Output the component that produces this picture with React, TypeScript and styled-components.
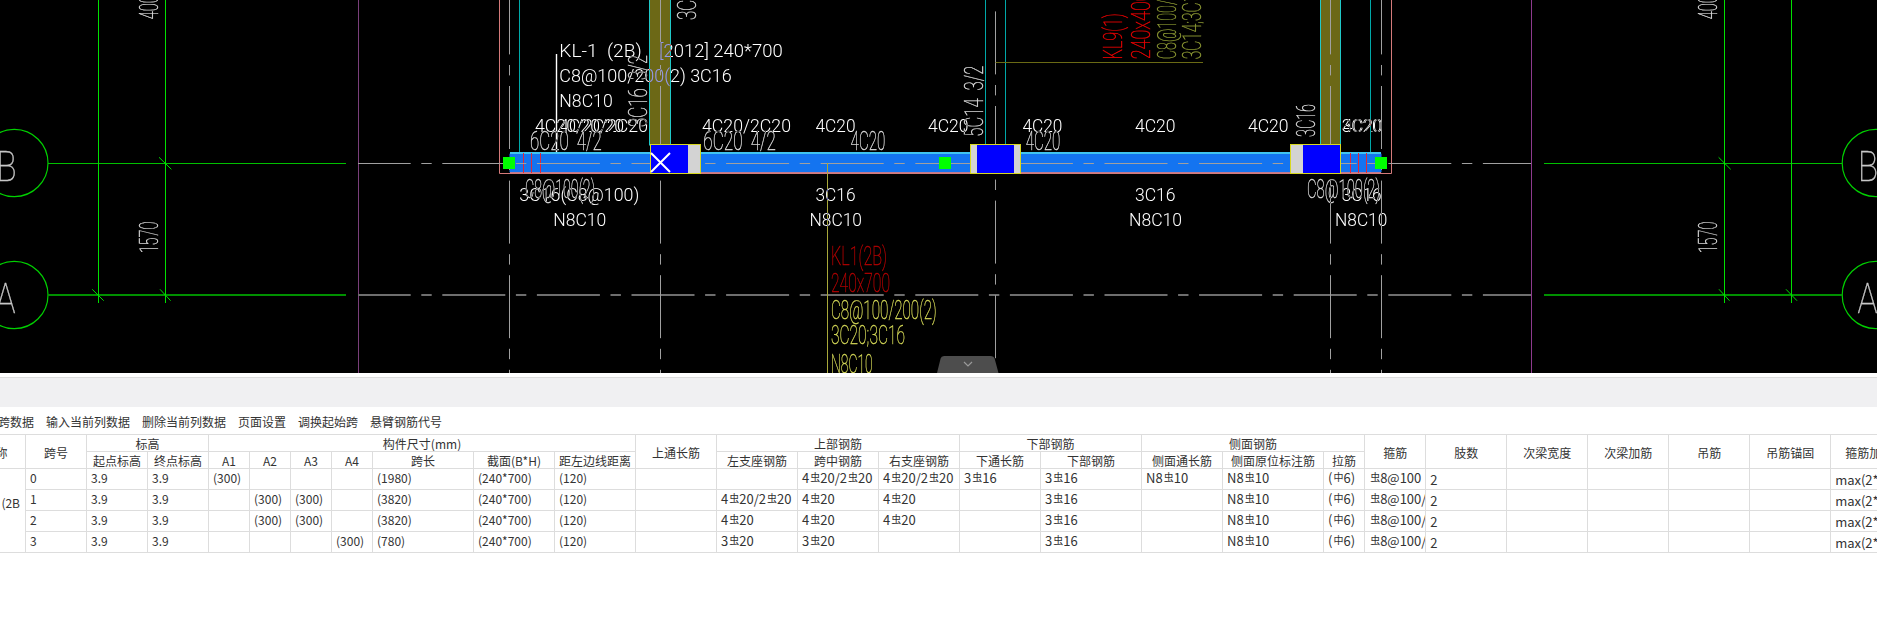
import React from "react";
import styled, { createGlobalStyle } from "styled-components";

const Global = createGlobalStyle`
  html, body { margin: 0; padding: 0; background: #fff; overflow: hidden; }
  body { width: 1877px; height: 636px; font-family: "Noto Sans CJK SC", "Liberation Sans", sans-serif; }
`;

const Page = styled.div`
  width: 1877px;
  height: 636px;
  display: flex;
  flex-direction: column;
  overflow: hidden;
  background: #fff;
`;

const CanvasArea = styled.div`
  position: relative;
  height: 373px;
  flex: none;
  background: #000;
`;

const Drawing = styled.svg`
  display: block;
  width: 1877px;
  height: 373px;
  background: #000;
  isolation: isolate;
`;

const CollapseTab = styled.button`
  position: absolute;
  left: 937px;
  bottom: 0;
  width: 62px;
  height: 17px;
  padding: 0;
  border: 0;
  background: none;
  display: block;
`;

const Divider = styled.div`
  flex: none;
  height: 4px;
  background: #fff;
  border-bottom: 1px solid #dcdcdc;
`;

const Band = styled.div`
  flex: none;
  height: 29px;
  background: #f0f0f2;
`;

const Toolbar = styled.div`
  flex: none;
  height: 28px;
  margin-left: -50px;
  display: flex;
  align-items: center;
  gap: 12px;
  padding-top: 2px;
  box-sizing: border-box;
`;

const ToolItem = styled.span`
  font-size: 12px;
  line-height: 16px;
  color: #333;
  white-space: nowrap;
`;

const TableViewport = styled.div`
  flex: none;
  overflow: hidden;
  width: 1877px;
  margin-top: -1px;
`;

const Grid = styled.table<{ $width: number }>`
  border-collapse: collapse;
  table-layout: fixed;
  width: ${(p) => p.$width}px;
  margin-left: -59px;
  font-size: 12px;
  color: #333;
`;

const HeadCell = styled.th`
  border: 1px solid #dddddd;
  padding: 1px 0 0;
  height: 15px;
  line-height: 15px;
  font-weight: 400;
  text-align: center;
  white-space: nowrap;
  overflow: hidden;
  vertical-align: middle;
`;

const Cell = styled.td<{ $low?: boolean; $size?: number }>`
  border: 1px solid #dddddd;
  padding: ${(p) => (p.$low ? "1px 0 0 4px" : "0 0 2px 4px")};
  height: ${(p) => (p.$low ? 19 : 18)}px;
  line-height: 16px;
  font-size: ${(p) => p.$size ?? 12}px;
  white-space: nowrap;
  overflow: hidden;
  vertical-align: middle;
`;

const NameCell = styled.td`
  border: 1px solid #dddddd;
  padding: 0 5px 16px 0;
  text-align: right;
  white-space: nowrap;
  overflow: hidden;
  vertical-align: middle;
`;

const BarMark = styled.span`
  font-size: 10px;
  line-height: 10px;
  display: inline-block;
  vertical-align: 2px;
  margin: 0 0 0 1px;
`;

const CadText = styled.text<{ $tone: string; $size: number; $thin?: boolean }>`
  font-family: "Roboto", "Liberation Sans", sans-serif;
  font-weight: ${(p) => (p.$thin ? 100 : 300)};
  font-size: ${(p) => p.$size}px;
  fill: ${(p) => p.$tone};
  stroke: ${(p) => (p.$thin ? p.$tone : "none")};
  stroke-width: ${(p) => (p.$thin ? 0.4 : 0)}px;
  white-space: pre;
  mix-blend-mode: difference;
`;

const DASH = "63 10.6 10.4 10.6";

type Lab = { x: number; y: number; w: number; t: string; c?: string; up?: boolean };

const whiteLabels: Lab[] = [
  { x: 559.3, y: 56.7, w: 82.4, t: "KL-1  (2B)" },
  { x: 659, y: 56.7, w: 123.7, t: "[2012] 240*700" },
  { x: 559.3, y: 81.7, w: 172.4, t: "C8@100/200(2) 3C16" },
  { x: 559.3, y: 107.3, w: 53.4, t: "N8C10" },
  { x: 535, y: 131.7, w: 89, t: "4C20/2C20" },
  { x: 559, y: 131.7, w: 89, t: "4C20/2C20" },
  { x: 702, y: 131.7, w: 89, t: "4C20/2C20" },
  { x: 815.5, y: 131.7, w: 40, t: "4C20" },
  { x: 928, y: 131.7, w: 40.6, t: "4C20" },
  { x: 1022.4, y: 131.7, w: 40, t: "4C20" },
  { x: 1135, y: 131.7, w: 40.6, t: "4C20" },
  { x: 1248, y: 131.7, w: 40.6, t: "4C20" },
  { x: 1341.7, y: 131.7, w: 40, t: "3C20" },
  { x: 1342.7, y: 131.7, w: 40, t: "4C20" },
  { x: 519.3, y: 200.7, w: 120, t: "3C16(C8@100)" },
  { x: 815.5, y: 200.7, w: 40, t: "3C16" },
  { x: 1135, y: 200.7, w: 40.6, t: "3C16" },
  { x: 1341.7, y: 200.7, w: 40, t: "3C16" },
  { x: 553.3, y: 226, w: 53, t: "N8C10" },
  { x: 809.4, y: 226, w: 52.6, t: "N8C10" },
  { x: 1129, y: 226, w: 53, t: "N8C10" },
  { x: 1335, y: 226, w: 52.3, t: "N8C10" },
];

const G = "#d8d8d8";
const cadLabels: Lab[] = [
  { x: 530, y: 150, w: 71.7, t: "6C20  4/2", c: G },
  { x: 703.3, y: 150, w: 72.7, t: "6C20  4/2", c: G },
  { x: 850.6, y: 150, w: 34.7, t: "4C20", c: G },
  { x: 1025.7, y: 150, w: 34.7, t: "4C20", c: G },
  { x: 525, y: 198.3, w: 70, t: "C8@100(2)", c: G },
  { x: 1307, y: 198, w: 73, t: "C8@100(2)", c: G },
  { x: 158.4, y: 253.3, w: 31.6, t: "1570", c: G, up: true },
  { x: 158.4, y: 19.3, w: 32, t: "4000", c: G, up: true },
  { x: 1717.4, y: 253.3, w: 31.6, t: "1570", c: G, up: true },
  { x: 1717.4, y: 19.3, w: 32, t: "4000", c: G, up: true },
  { x: 983, y: 136.7, w: 71, t: "5C14  3/2", c: G, up: true },
  { x: 1315, y: 137, w: 33, t: "3C16", c: G, up: true },
  { x: 646.7, y: 127, w: 72, t: "3C16  3/2", c: G, up: true },
  { x: 696.3, y: 20, w: 72, t: "3C16  3/2", c: G, up: true },
  { x: 1122.4, y: 59.3, w: 46, t: "KL9(1)", c: "#e80000", up: true },
  { x: 1150.2, y: 59.3, w: 68, t: "240x400", c: "#e80000", up: true },
  { x: 1176, y: 59.3, w: 100, t: "C8@100/200(2)", c: "#8a9632", up: true },
  { x: 1201, y: 59.3, w: 74, t: "3C14;3C16", c: "#8a9632", up: true },
  { x: 831, y: 265, w: 56, t: "KL1(2B)", c: "#b00000" },
  { x: 831, y: 292, w: 59, t: "240x700", c: "#b00000" },
  { x: 831, y: 319, w: 105.7, t: "C8@100/200(2)", c: "#d0d455" },
  { x: 831, y: 344, w: 74, t: "3C20;3C16", c: "#d0d455" },
  { x: 831, y: 373, w: 41.6, t: "N8C10", c: "#d0d455" },
];

function Label({ l, size, thin }: { l: Lab; size: number; thin?: boolean }) {
  return (
    <CadText
      x={l.x}
      y={l.y}
      $size={size}
      $tone={l.c ?? "#fff"}
      $thin={thin}
      textLength={l.w}
      lengthAdjust="spacingAndGlyphs"
      transform={l.up ? `rotate(-90 ${l.x} ${l.y})` : undefined}
    >
      {l.t}
    </CadText>
  );
}

const Bubble = ({ cy, letter, cx, tx }: { cy: number; letter: string; cx: number; tx: number }) => (
  <>
    <circle cx={cx} cy={cy} r={33.6} fill="none" stroke="#00d000" strokeWidth={1.2} />
    <CadText x={tx} y={cy + 18} $size={43} $tone="#c8c8c8" $thin textLength={20} lengthAdjust="spacingAndGlyphs">
      {letter}
    </CadText>
  </>
);

function CadDrawing() {
  const dashV = (x: number, start: number, color = "#a0a0a0") => (
    <line key={x} x1={x} x2={x} y1={start} y2={373} stroke={color} strokeWidth={1} strokeDasharray={DASH} />
  );
  return (
    <Drawing viewBox="0 0 1877 373">
      {/* grid bubbles and green axes */}
      <Bubble cx={14.4} cy={163} tx={-3.5} letter="B" />
      <Bubble cx={14.4} cy={295} tx={-4.5} letter="A" />
      <Bubble cx={1875.8} cy={163} tx={1858} letter="B" />
      <Bubble cx={1875.8} cy={295} tx={1857.5} letter="A" />
      <g fill="none">
        <line x1={48} x2={346} y1={163.5} y2={163.5} strokeWidth={1} stroke="#00c000" />
        <line x1={48} x2={346} y1={295} y2={295} strokeWidth={2} stroke="#009000" />
        <line x1={1544} x2={1842} y1={163.5} y2={163.5} strokeWidth={1} stroke="#00c000" />
        <line x1={1544} x2={1842} y1={295} y2={295} strokeWidth={2} stroke="#009000" />
      </g>
      <g stroke="#00e000" fill="none" strokeWidth={1}>
        <line x1={98.5} x2={98.5} y1={0} y2={303} />
        <line x1={165.5} x2={165.5} y1={0} y2={303} />
        <line x1={1724.5} x2={1724.5} y1={0} y2={303} />
        <line x1={1791.5} x2={1791.5} y1={0} y2={303} />
        <line x1={159} y1={157.3} x2={171.4} y2={169.3} />
        <line x1={92.2} y1={289.3} x2={103.7} y2={300.7} />
        <line x1={160} y1={289.3} x2={170.6} y2={300.7} />
        <line x1={1718.6} y1={157.3} x2={1730.7} y2={169.3} />
        <line x1={1719} y1={289.3} x2={1729.5} y2={300.7} />
        <line x1={1786} y1={289.3} x2={1797} y2={300.7} />
      </g>

      {/* outer frame */}
      <line x1={358.5} x2={358.5} y1={0} y2={373} stroke="#7a3f7a" />
      <line x1={1531.5} x2={1531.5} y1={0} y2={373} stroke="#8e3a8e" />

      {/* teal column edges */}
      <g stroke="#00a8a8" strokeWidth={1}>
        <line x1={519.5} x2={519.5} y1={0} y2={152} />
        <line x1={985.5} x2={985.5} y1={0} y2={152} />
        <line x1={1005.5} x2={1005.5} y1={0} y2={152} />
        <line x1={1370.5} x2={1370.5} y1={0} y2={152} />
      </g>

      {/* olive secondary beams */}
      <rect x={649.5} y={-2} width={21} height={147} fill="#6c6816" stroke="#20c8c8" />
      <rect x={1320.5} y={-2} width={20} height={147} fill="#6c6816" stroke="#20c8c8" />

      {/* main beam */}
      <rect x={509.5} y={152.5} width={872} height={21} rx={2} fill="#1474f0" />
      <line x1={510} x2={1381} y1={153} y2={153} stroke="#40c4f0" strokeWidth={2} />
      <line x1={510} x2={1381} y1={172.5} y2={172.5} stroke="#c07a90" />
      <path d="M499.5 0V173.5H1391.5V0" fill="none" stroke="#d47a7a" />
      <g stroke="#e02838" strokeWidth={1}>
        {[523.5, 531.5, 540.5, 1350.5, 1358.5, 1366.5].map((x) => (
          <line key={x} x1={x} x2={x} y1={153} y2={173} />
        ))}
      </g>

      {/* axes dash lines */}
      <line x1={358} x2={1531} y1={163.5} y2={163.5} stroke="#a0a0a0" strokeWidth={1} strokeDasharray={DASH} strokeDashoffset={10.3} />
      <line x1={358} x2={1531} y1={295} y2={295} stroke="#6e6e6e" strokeWidth={2} strokeDasharray={DASH} strokeDashoffset={10.3} />
      {dashV(509.5, -8.6)}
      {dashV(660.5, -8.6)}
      {dashV(995.5, 11.4)}
      {dashV(1330.5, -8.6)}
      {dashV(1381.5, -8.6)}

      {/* columns */}
      <rect x={650.5} y={144.5} width={50} height={29} fill="#d3d3d3" stroke="#d8d820" />
      <rect x={651} y={145} width={37} height={28} fill="#0000ff" />
      <path d="M651 172L670 153M651 153L670 172" stroke="#fff" strokeWidth={2} />
      <rect x={970.5} y={144.5} width={50} height={29} fill="#d3d3d3" stroke="#d8d820" />
      <rect x={977} y={145} width={37} height={28} fill="#0000ff" />
      <rect x={1290.5} y={144.5} width={50} height={29} fill="#0000ff" stroke="#d8d820" />
      <rect x={1291} y={145} width={12} height={28} fill="#d3d3d3" />

      {/* support nodes */}
      <rect x={503} y={157} width={12} height={12} fill="#00ff00" />
      <rect x={939} y={157} width={12} height={12} fill="#00ff00" />
      <rect x={1375} y={157} width={12} height={12} fill="#00ff00" />

      {/* leaders */}
      <line x1={556.5} x2={556.5} y1={54} y2={152} stroke="#fff" strokeWidth={1.4} />
      <line x1={995.5} x2={1203} y1={62.5} y2={62.5} stroke="#6a6a14" />
      <line x1={827.5} x2={827.5} y1={163} y2={373} stroke="#a8a83a" />

      {cadLabels.map((l, i) => (
        <Label key={i} l={l} size={25} thin />
      ))}
      {whiteLabels.map((l, i) => (
        <Label key={i} l={l} size={17.5} />
      ))}
    </Drawing>
  );
}

const Rb = () => <BarMark>虫</BarMark>;
const Rm = () => <BarMark>中</BarMark>;

const tools = ["删除当前跨数据", "输入当前列数据", "删除当前列数据", "页面设置", "调换起始跨", "悬臂钢筋代号"];
const widths = [84, 61, 61, 61, 41, 41, 41, 41, 101, 81, 81, 81, 81, 81, 81, 81, 101, 81, 101, 41, 61, 81, 81, 81, 81, 81, 101];
const tableWidth = widths.reduce((a, b) => a + b, 0);

type RowData = {
  no: string; a: string[]; len: string;
  tl: React.ReactNode; tm: React.ReactNode; tr: React.ReactNode; bt: React.ReactNode; bb: React.ReactNode; side: React.ReactNode; stir: React.ReactNode;
};

const tA = (n: string, m: string) => <>{n}<Rb />{m}</>;
const twoBars = <>4<Rb />20/2<Rb />20</>;

const rows: RowData[] = [
  { no: "0", a: ["(300)", "", "", ""], len: "(1980)", tl: "", tm: twoBars, tr: twoBars, bt: tA("3", "16"), bb: tA("3", "16"), side: tA("N8", "10"), stir: <><Rb />8@100</> },
  { no: "1", a: ["", "(300)", "(300)", ""], len: "(3820)", tl: twoBars, tm: tA("4", "20"), tr: tA("4", "20"), bt: "", bb: tA("3", "16"), side: "", stir: <><Rb />8@100/200(2)</> },
  { no: "2", a: ["", "(300)", "(300)", ""], len: "(3820)", tl: tA("4", "20"), tm: tA("4", "20"), tr: tA("4", "20"), bt: "", bb: tA("3", "16"), side: "", stir: <><Rb />8@100/200(2)</> },
  { no: "3", a: ["", "", "", "(300)"], len: "(780)", tl: tA("3", "20"), tm: tA("3", "20"), tr: "", bt: "", bb: tA("3", "16"), side: "", stir: <><Rb />8@100/200(2)</> },
];

export default function App() {
  return (
    <Page>
      <Global />
      <CanvasArea>
        <CadDrawing />
        <CollapseTab aria-label="collapse">
          <svg width="62" height="17" viewBox="0 0 62 17">
            <path d="M0 17L3.6 2.5Q4.2 0 7 0H54Q57 0 57.6 2.5L61.5 17Z" fill="#4d4d4d" />
            <path d="M27 6L31 10L35 6" fill="none" stroke="#9a9a9a" strokeWidth={1.2} />
          </svg>
        </CollapseTab>
      </CanvasArea>
      <Divider />
      <Band />
      <Toolbar>
        {tools.map((t) => (
          <ToolItem key={t}>{t}</ToolItem>
        ))}
      </Toolbar>
      <TableViewport>
        <Grid $width={tableWidth}>
          <colgroup>
            {widths.map((w, i) => (
              <col key={i} style={{ width: w }} />
            ))}
          </colgroup>
          <thead>
            <tr>
              <HeadCell rowSpan={2}>构件名称</HeadCell>
              <HeadCell rowSpan={2}>跨号</HeadCell>
              <HeadCell colSpan={2}>标高</HeadCell>
              <HeadCell colSpan={7}>构件尺寸(mm)</HeadCell>
              <HeadCell rowSpan={2}>上通长筋</HeadCell>
              <HeadCell colSpan={3}>上部钢筋</HeadCell>
              <HeadCell colSpan={2}>下部钢筋</HeadCell>
              <HeadCell colSpan={3}>侧面钢筋</HeadCell>
              <HeadCell rowSpan={2}>箍筋</HeadCell>
              <HeadCell rowSpan={2}>肢数</HeadCell>
              <HeadCell rowSpan={2}>次梁宽度</HeadCell>
              <HeadCell rowSpan={2}>次梁加筋</HeadCell>
              <HeadCell rowSpan={2}>吊筋</HeadCell>
              <HeadCell rowSpan={2}>吊筋锚固</HeadCell>
              <HeadCell rowSpan={2}>箍筋加密长度</HeadCell>
            </tr>
            <tr>
              {["起点标高", "终点标高", "A1", "A2", "A3", "A4", "跨长", "截面(B*H)", "距左边线距离", "左支座钢筋", "跨中钢筋", "右支座钢筋", "下通长筋", "下部钢筋", "侧面通长筋", "侧面原位标注筋", "拉筋"].map((h) => (
                <HeadCell key={h}>{h}</HeadCell>
              ))}
            </tr>
          </thead>
          <tbody>
            {rows.map((r, i) => (
              <tr key={r.no}>
                {i === 0 && <NameCell rowSpan={4}>KL-1 (2B</NameCell>}
                <Cell>{r.no}</Cell>
                <Cell>3.9</Cell>
                <Cell>3.9</Cell>
                {r.a.map((v, k) => (
                  <Cell key={k}>{v}</Cell>
                ))}
                <Cell>{r.len}</Cell>
                <Cell>(240*700)</Cell>
                <Cell>(120)</Cell>
                <Cell />
                <Cell $size={13}>{r.tl}</Cell>
                <Cell $size={13}>{r.tm}</Cell>
                <Cell $size={13}>{r.tr}</Cell>
                <Cell $size={13}>{r.bt}</Cell>
                <Cell $size={13}>{r.bb}</Cell>
                <Cell $size={13}>{r.side}</Cell>
                <Cell $size={13}>N8<Rb />10</Cell>
                <Cell $size={13}>(<Rm />6)</Cell>
                <Cell $size={13}>{r.stir}</Cell>
                <Cell $low $size={13}>2</Cell>
                <Cell />
                <Cell />
                <Cell />
                <Cell />
                <Cell $low $size={13}>max(2*h,500)</Cell>
              </tr>
            ))}
          </tbody>
        </Grid>
      </TableViewport>
    </Page>
  );
}
